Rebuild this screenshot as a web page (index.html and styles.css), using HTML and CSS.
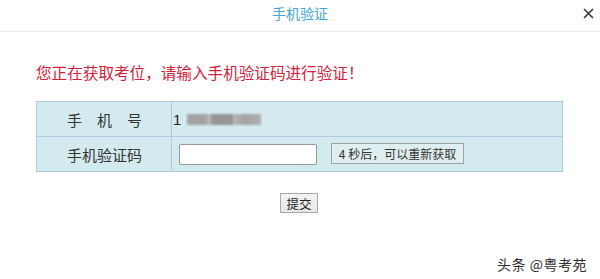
FILE: index.html
```html
<!DOCTYPE html>
<html lang="zh-CN">
<head>
<meta charset="utf-8">
<title>手机验证</title>
<link rel="stylesheet" href="styles.css">
</head>
<body>
<div class="dialog">
  <header class="head">
    <span></span>
    <h1 class="title">手机验证</h1>
    <span class="close">
      <svg width="11" height="11" viewBox="0 0 11 11"><path d="M1 1L10 10M10 1L1 10" stroke="#3a3a3a" stroke-width="1.6" fill="none"/></svg>
    </span>
  </header>
  <main class="body">
    <p class="notice">您正在获取考位，请输入手机验证码进行验证！</p>
    <div class="form">
      <div class="label top spaced"><span>手</span><span>机</span><span>号</span></div>
      <div class="value top">
        <span class="phone">1</span>
        <span class="mask"><i class="m1"></i><i class="m2"></i><i class="m3"></i><i class="m4"></i></span>
      </div>
      <div class="label">手机验证码</div>
      <div class="value">
        <input class="code" type="text">
        <button class="resend" type="button">4 秒后，可以重新获取</button>
      </div>
    </div>
    <div class="actions">
      <button class="submit" type="button">提交</button>
    </div>
  </main>
  <div class="mark">头条 @粤考苑</div>
</div>
</body>
</html>
```
FILE: styles.css
```css
html, body {
  margin: 0;
  padding: 0;
  background: #fff;
}
body {
  font-family: "Noto Sans CJK SC", "Liberation Sans", sans-serif;
  color: #333;
}
.dialog {
  position: relative;
  width: 600px;
  height: 279px;
  overflow: hidden;
}
.head {
  height: 31px;
  border-bottom: 1px solid #eeeeee;
  display: grid;
  grid-template-columns: 1fr auto 1fr;
  align-items: center;
}
.title {
  margin: 0;
  font-size: 14px;
  font-weight: normal;
  line-height: 20px;
  color: #43a4d8;
  padding-bottom: 6px;
}
.close {
  justify-self: end;
  padding-right: 6px;
  padding-bottom: 4px;
  display: flex;
}
.body {
  padding: 0 0 0 36px;
}
.notice {
  margin: 30px 0 0 0;
  font-size: 15.6px;
  line-height: 20px;
  color: #d4223a;
}
.form {
  margin-top: 19px;
  width: 527px;
  box-sizing: border-box;
  display: grid;
  grid-template-columns: 135px 1fr;
  border: 1px solid #afc9e5;
  background: #d3ebef;
}
.label, .value {
  height: 34px;
  display: flex;
  align-items: center;
}
.top {
  border-bottom: 1px solid #afc9e5;
}
.label {
  border-right: 1px solid #afc9e5;
  justify-content: center;
  font-size: 15px;
  color: #333;
  padding-left: 1px;
}
.spaced {
  gap: 15px;
}
.value {
  padding-left: 1px;
}
.phone {
  font-size: 15px;
  color: #222;
  font-family: "Liberation Sans", sans-serif;
}
.mask {
  display: flex;
  margin-left: 6px;
  height: 11px;
  filter: blur(0.8px);
}
.mask i {
  display: block;
  height: 11px;
}
.m1 { width: 20px; background: #a3a3a3; }
.m2 { width: 4px; background: #b8b8b8; }
.m3 { width: 22px; background: #959595; }
.m4 { width: 28px; background: linear-gradient(90deg, #b8b8b8, #a3a3a3 40%, #afafaf); }
.code {
  margin: 0 0 0 6px;
  width: 138px;
  height: 21px;
  box-sizing: border-box;
  border: 1px solid #9a9a9a;
  border-radius: 2px;
  background: #fff;
  padding: 0;
}
.resend {
  margin: -1px 0 0 14px;
  width: 133px;
  height: 21px;
  box-sizing: border-box;
  border: 1px solid #9aa3a6;
  background: #dfeeee;
  font-family: "Noto Sans CJK SC", "Liberation Sans", sans-serif;
  font-size: 12px;
  line-height: 17px;
  color: #333;
  padding: 0;
}
.actions {
  width: 527px;
  display: flex;
  justify-content: center;
  margin-top: 21px;
}
.submit {
  margin-left: -1px;
  width: 38px;
  height: 20px;
  box-sizing: border-box;
  border: 1px solid #a9a9a9;
  background: linear-gradient(#f4f4f4, #e6e6e6);
  font-family: "Noto Sans CJK SC", "Liberation Sans", sans-serif;
  font-size: 12.5px;
  line-height: 17px;
  color: #222;
  padding: 0;
}
.mark {
  position: absolute;
  right: 13px;
  bottom: 6px;
  font-size: 14px;
  line-height: 18px;
  letter-spacing: 0.5px;
  color: #2e2e2e;
  text-shadow: 0 0 2px #fff;
}
```
